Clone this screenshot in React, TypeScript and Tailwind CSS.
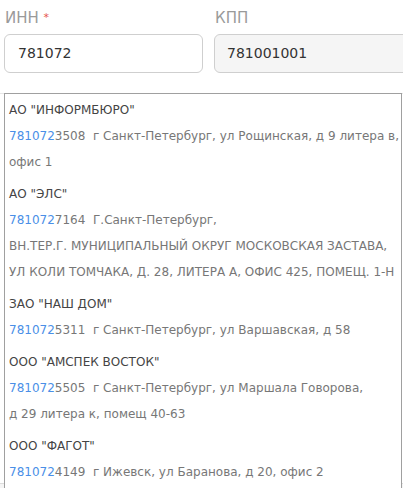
import React from 'react'

const font = { fontFamily: '"DejaVu Sans", "Liberation Sans", sans-serif' }

// suggestions shown under the INN field, address split the way it wraps
const items = [
  {
    name: 'АО "ИНФОРМБЮРО"',
    rest: '3508',
    lines: ['г Санкт-Петербург, ул Рощинская, д 9 литера в,', 'офис 1'],
  },
  {
    name: 'АО "ЭЛС"',
    rest: '7164',
    lines: [
      'Г.Санкт-Петербург,',
      'ВН.ТЕР.Г. МУНИЦИПАЛЬНЫЙ ОКРУГ МОСКОВСКАЯ ЗАСТАВА,',
      'УЛ КОЛИ ТОМЧАКА, Д. 28, ЛИТЕРА А, ОФИС 425, ПОМЕЩ. 1-Н',
    ],
  },
  {
    name: 'ЗАО "НАШ ДОМ"',
    rest: '5311',
    lines: ['г Санкт-Петербург, ул Варшавская, д 58'],
  },
  {
    name: 'ООО "АМСПЕК ВОСТОК"',
    rest: '5505',
    lines: ['г Санкт-Петербург, ул Маршала Говорова,', 'д 29 литера к, помещ 40-63'],
  },
  {
    name: 'ООО "ФАГОТ"',
    rest: '4149',
    lines: ['г Ижевск, ул Баранова, д 20, офис 2'],
  },
]

export default function App() {
  return (
    <div className="relative w-[403px] h-[488px] overflow-hidden bg-white" style={font}>
      {/* Form row */}
      <div className="flex gap-[11px] pl-[4px]">
        <div className="w-[199px] shrink-0">
          <div className="pt-[8px] pb-[6px] pl-[1px] h-[34px] text-[15px] leading-[20px] text-[#9a9a9a]">
            ИНН <span className="text-[#e5534b] text-[11px] relative top-[-2px]">*</span>
          </div>
          <div className="h-[39px] rounded-[6px] border border-[#cfcfcf] bg-white px-[13px] flex items-center text-[14px] text-[#333]">
            781072
          </div>
        </div>
        <div className="w-[220px] shrink-0">
          <div className="pt-[8px] pb-[6px] pl-[1px] h-[34px] text-[15px] leading-[20px] text-[#9a9a9a]">
            КПП
          </div>
          <div className="h-[39px] rounded-[6px] border border-[#cfcfcf] bg-[#f5f5f5] px-[12px] flex items-center text-[14px] text-[#333]">
            781001001
          </div>
        </div>
      </div>

      {/* Content behind the dropdown */}
      <div className="mt-[20px] h-[390px] border-t border-[#e6e6e6]" />
      <div className="h-[20px] bg-[#f5f5f5] border-t border-[#dcdcdc] flex">
        <div className="w-[165px] border-r border-[#cfcfcf]" />
      </div>

      {/* Suggestions dropdown */}
      <div className="absolute left-[4px] top-[93px] w-[398px] border border-[#a0a0a0] bg-white">
        {items.map((item) => (
          <div key={item.name} className="px-[4px] py-[3px] text-[12px] leading-[26px] whitespace-nowrap">
            <div className="text-[#444]">{item.name}</div>
            {item.lines.map((line, i) => (
              <div key={i} className="text-[#777]">
                {i === 0 && (
                  <>
                    <span className="text-[#4a8fe7]">781072</span>
                    <span>{item.rest}&nbsp;&nbsp;</span>
                  </>
                )}
                {line}
              </div>
            ))}
          </div>
        ))}
      </div>
    </div>
  )
}
